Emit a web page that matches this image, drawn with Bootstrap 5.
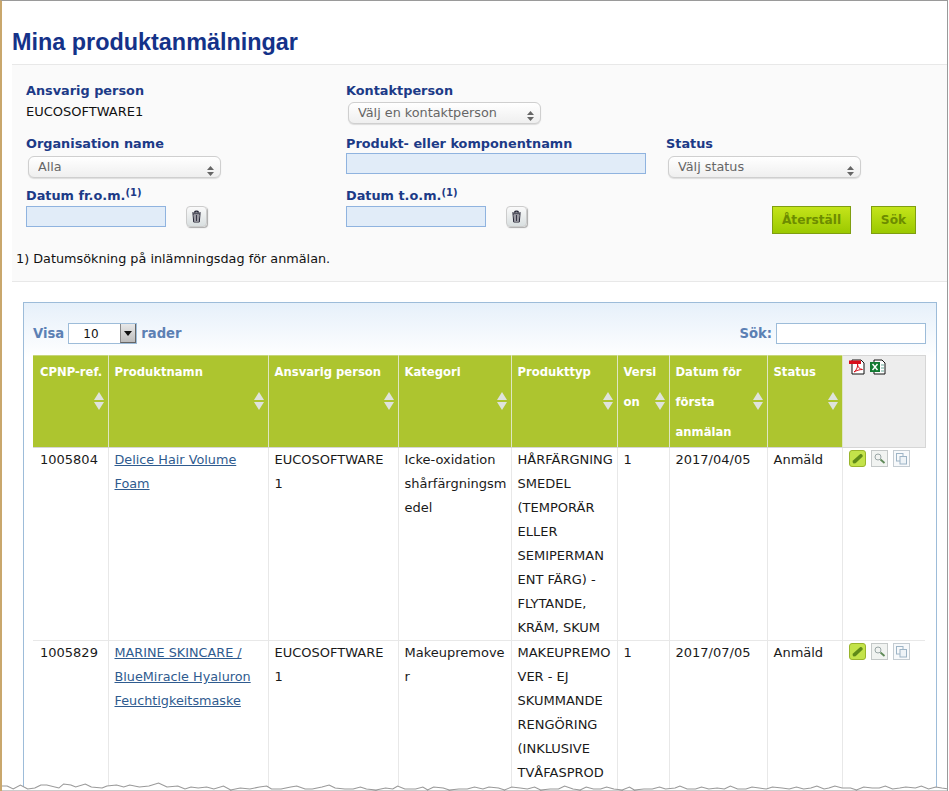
<!DOCTYPE html>
<html lang="sv">
<head>
<meta charset="utf-8">
<title>Mina produktanmälningar</title>
<link rel="stylesheet" href="https://cdn.jsdelivr.net/npm/bootstrap@5.3.0/dist/css/bootstrap.min.css">
<style>
html,body{margin:0;background:#fff;overflow:hidden}
body{font-family:"DejaVu Sans",Verdana,sans-serif;font-size:13px;color:#1a1a1a}
.frame{position:relative;width:948px;height:791px;overflow:hidden;background:#fff;border-top:1px solid #9a9a9a;border-left:2px solid #c9a76c;border-right:1px solid #9a9a9a}
.page-title{font-family:"Liberation Sans",Arial,sans-serif;font-weight:700;font-size:23.4px;line-height:28px;color:#143289;margin:27px 0 8px 10px}
.filter-panel{margin-left:10px;height:218px;background:#fafafa;border-top:1px solid #e8e8e8;border-bottom:1px solid #e8e8e8;padding:18px 0 0 14px}
.filter-grid{display:grid;grid-template-columns:320px 320px 1fr}
.f-label{display:block;font-weight:700;font-size:12.85px;line-height:16px;color:#1c3a87;margin:0}
.f-label sup{font-size:10px;top:-.45em}
.f-value{line-height:16px;margin-top:5px;font-size:13px;color:#111}
.cell-a{height:53px}.cell-b{height:52px}
.pill-select{display:block;width:193px;height:22px;margin:3px 0 0 2px;padding:0 0 0 9px;font-family:inherit;font-size:12.8px;line-height:20px;color:#666;border:1px solid #cfcfcf;border-radius:6px;background-color:#f6f6f6;background-image:linear-gradient(#fff,#efefef);appearance:none;box-shadow:0 1px 1px #ddd}
.cell-b .pill-select{margin-top:4px}
.pill-wrap{position:relative;width:195px}
.pill-wrap svg{position:absolute;right:7px;top:9px}
.cell-b .pill-wrap svg{top:10px}
.blue-input{display:block;height:21px;border:1px solid #8fb3df;background:#e1ecf8;border-radius:0;padding:0 3px}
.w-date{width:140px}.w-prod{width:300px;margin-top:1px}
.date-row{display:flex;align-items:flex-start;gap:20px;margin-top:2px}
.trash-btn{width:21px;height:21px;padding:0;display:flex;align-items:center;justify-content:center;border:1px solid #ccc;border-radius:4px;background:linear-gradient(#fafafa,#d9dfe0);box-shadow:1px 1px 1px #aaa}
.action-col{display:flex;gap:20px;padding:18px 0 0 106px}
.lime-btn{height:28px;padding:0;border:1px solid #7f9e10;border-radius:0;background:linear-gradient(#c4e41a,#9bc900);color:#6d8c00;font-weight:700;font-family:inherit;font-size:12.2px;line-height:26px}
.lime-btn:hover{background:linear-gradient(#c4e41a,#9bc900);color:#6d8c00;border-color:#7f9e10}
.w-reset{width:79px}.w-find{width:45px}
.foot-note{margin:17px 0 0 -10px;line-height:16px;font-size:12.8px;color:#111}
.table-panel{margin:20px 0 0 21px;width:914px;height:600px;border:1px solid #9dbcd9;background:linear-gradient(#e6f0fa 0,#fff 55px);padding:20px 10px 0 9px}
.tools-row{display:flex;justify-content:space-between;align-items:center;height:21px;margin-bottom:11px;font-weight:700;font-size:13.2px;color:#5c80b4}
.len-box{display:inline-flex;align-items:stretch;width:69px;height:21px;margin:0 4px;border:1px solid #9dbcd9;background:#fff;vertical-align:middle}
.len-box select{flex:1;min-width:0;border:0;background:#fff;appearance:none;padding:0 0 0 14px;font-family:inherit;font-size:12px;color:#111;outline:0}
.len-arrow{width:16px;background:linear-gradient(#e8e8e8,#bdbdbd);border-left:1px solid #888;border-right:1px solid #666;border-bottom:1px solid #666;display:flex;align-items:center;justify-content:center}
.search-input{width:150px;height:21px;border:1px solid #9dbcd9;background:#fff;margin-left:4px;padding:0 3px;vertical-align:middle}
.prod-table{table-layout:fixed;width:892px;border-collapse:collapse;margin:0;font-size:13px}
.prod-table th{position:relative;vertical-align:top;background:#adc52f;color:#fff;font-weight:700;font-size:11.6px;line-height:30px;padding:2px 0 0 6px;border-right:1px solid #dfe6c2;white-space:nowrap;border-bottom:1px solid #d6d6d6;box-shadow:inset 0 1px #c6d57a}
.prod-table th.tools-head{background:#ededed;border-right:1px solid #d6d6d6;padding:4px 0 0 6px;box-shadow:inset 0 1px #d6d6d6}
.prod-table td{vertical-align:top;line-height:24px;padding:0 0 0 6px;border-right:1px solid #e8e8e8;border-bottom:1px solid #e8e8e8;white-space:nowrap;color:#1a1a1a;overflow:hidden}
.prod-table th:first-child,.prod-table td:first-child{padding-left:7px}
.prod-table td:last-child{border-right:0;padding:2px 0 0 6px}
.prod-table tr.open-row td{border-bottom:0;height:170px}
.prod-table a{color:#2f5b8f;text-decoration:underline;font-size:12.8px}
.sort-mark{position:absolute;right:4px;top:37px}
.icon-set{display:flex;gap:5px;line-height:0}
.head-icons{display:flex;gap:4px;line-height:0}
.tear{position:absolute;left:-2px;bottom:0;display:block}
</style>
</head>
<body>
<div class="frame">
  <h1 class="page-title">Mina produktanmälningar</h1>

  <form class="filter-panel">
    <div class="filter-grid">
      <div class="cell-a">
        <span class="f-label">Ansvarig person</span>
        <div class="f-value">EUCOSOFTWARE1</div>
      </div>
      <div class="cell-a">
        <label class="f-label">Kontaktperson</label>
        <div class="pill-wrap">
          <select class="pill-select"><option>Välj en kontaktperson</option></select>
          <svg width="7" height="10" viewBox="0 0 7 10"><path d="M3.500 0L7 4H0zM3.500 10L0 6h7z" fill="#666"/></svg>
        </div>
      </div>
      <div></div>

      <div class="cell-b">
        <label class="f-label">Organisation name</label>
        <div class="pill-wrap">
          <select class="pill-select"><option>Alla</option></select>
          <svg width="7" height="10" viewBox="0 0 7 10"><path d="M3.500 0L7 4H0zM3.500 10L0 6h7z" fill="#666"/></svg>
        </div>
      </div>
      <div class="cell-b">
        <label class="f-label">Produkt- eller komponentnamn</label>
        <input class="blue-input w-prod" type="text">
      </div>
      <div class="cell-b">
        <label class="f-label">Status</label>
        <div class="pill-wrap">
          <select class="pill-select"><option>Välj status</option></select>
          <svg width="7" height="10" viewBox="0 0 7 10"><path d="M3.500 0L7 4H0zM3.500 10L0 6h7z" fill="#666"/></svg>
        </div>
      </div>

      <div>
        <label class="f-label">Datum fr.o.m.<sup>(1)</sup></label>
        <div class="date-row">
          <input class="blue-input w-date" type="text">
          <button type="button" class="btn trash-btn" aria-label="Rensa">
            <svg width="11" height="13" viewBox="0 0 11 13"><path d="M1 3h9M3.500 2.200C4 .8 7 .8 7.500 2.200" fill="none" stroke="#223" stroke-width="1.200"/><path d="M2 4h7l-.7 8H2.700z" fill="#fff" stroke="#223"/><path d="M4 5v6M5.500 5v6M7 5v6" stroke="#223" stroke-width=".9"/></svg>
          </button>
        </div>
      </div>
      <div>
        <label class="f-label">Datum t.o.m.<sup>(1)</sup></label>
        <div class="date-row">
          <input class="blue-input w-date" type="text">
          <button type="button" class="btn trash-btn" aria-label="Rensa">
            <svg width="11" height="13" viewBox="0 0 11 13"><path d="M1 3h9M3.500 2.200C4 .8 7 .8 7.500 2.200" fill="none" stroke="#223" stroke-width="1.200"/><path d="M2 4h7l-.7 8H2.700z" fill="#fff" stroke="#223"/><path d="M4 5v6M5.500 5v6M7 5v6" stroke="#223" stroke-width=".9"/></svg>
          </button>
        </div>
      </div>
      <div class="action-col">
        <button type="button" class="btn lime-btn w-reset">Återställ</button>
        <button type="button" class="btn lime-btn w-find">Sök</button>
      </div>
    </div>
    <p class="foot-note">1) Datumsökning på inlämningsdag för anmälan.</p>
  </form>

  <div class="table-panel">
    <div class="tools-row">
      <div>Visa<span class="len-box"><select><option>10</option></select><span class="len-arrow"><svg width="8" height="5" viewBox="0 0 8 5"><path d="M0 0h8L4 5z" fill="#111"/></svg></span></span>rader</div>
      <div>Sök:<input class="search-input" type="text"></div>
    </div>
    <table class="prod-table">
      <colgroup><col style="width:75px"><col style="width:160px"><col style="width:130px"><col style="width:113px"><col style="width:106px"><col style="width:52px"><col style="width:98px"><col style="width:75px"><col style="width:83px"></colgroup>
      <thead>
        <tr>
          <th>CPNP-ref.<svg class="sort-mark" width="10" height="18" viewBox="0 0 10 18"><path d="M5 0l5 8H0z" fill="#dfe3dc"/><path d="M5 18l5-8H0z" fill="#dfe3dc"/></svg></th>
          <th>Produktnamn<svg class="sort-mark" width="10" height="18" viewBox="0 0 10 18"><path d="M5 0l5 8H0z" fill="#dfe3dc"/><path d="M5 18l5-8H0z" fill="#dfe3dc"/></svg></th>
          <th>Ansvarig person<svg class="sort-mark" width="10" height="18" viewBox="0 0 10 18"><path d="M5 0l5 8H0z" fill="#dfe3dc"/><path d="M5 18l5-8H0z" fill="#dfe3dc"/></svg></th>
          <th>Kategori<svg class="sort-mark" width="10" height="18" viewBox="0 0 10 18"><path d="M5 0l5 8H0z" fill="#dfe3dc"/><path d="M5 18l5-8H0z" fill="#dfe3dc"/></svg></th>
          <th>Produkttyp<svg class="sort-mark" width="10" height="18" viewBox="0 0 10 18"><path d="M5 0l5 8H0z" fill="#dfe3dc"/><path d="M5 18l5-8H0z" fill="#dfe3dc"/></svg></th>
          <th>Versi<br>on<svg class="sort-mark" width="10" height="18" viewBox="0 0 10 18"><path d="M5 0l5 8H0z" fill="#dfe3dc"/><path d="M5 18l5-8H0z" fill="#dfe3dc"/></svg></th>
          <th>Datum för<br>första<br>anmälan<svg class="sort-mark" width="10" height="18" viewBox="0 0 10 18"><path d="M5 0l5 8H0z" fill="#dfe3dc"/><path d="M5 18l5-8H0z" fill="#dfe3dc"/></svg></th>
          <th>Status<svg class="sort-mark" width="10" height="18" viewBox="0 0 10 18"><path d="M5 0l5 8H0z" fill="#dfe3dc"/><path d="M5 18l5-8H0z" fill="#dfe3dc"/></svg></th>
          <th class="tools-head"><div class="head-icons">
            <svg width="17" height="16" viewBox="0 0 17 16"><path d="M3 1h9l3 3v11H3z" fill="#fff" stroke="#111"/><path d="M0 1.500h12V5H0z" fill="#d8101c"/><path d="M5 13c3-2 4-6 3.500-8 0 3 2 5 5 5.500-3 0-6 1-8.500 2.500z" fill="none" stroke="#d8101c"/></svg>
            <svg width="16" height="16" viewBox="0 0 16 16"><path d="M4 1h8l3 3v11H4z" fill="#fff" stroke="#111"/><path d="M0 3h10v10H0z" fill="#127a32"/><path d="M2.500 5l5 6M7.500 5l-5 6" stroke="#fff" stroke-width="1.400"/><path d="M11 6h3M11 9h3M11 12h3" stroke="#6a9"/></svg>
          </div></th>
        </tr>
      </thead>
      <tbody>
        <tr>
          <td>1005804</td>
          <td><a href="#">Delice Hair Volume<br>Foam</a></td>
          <td>EUCOSOFTWARE<br>1</td>
          <td>Icke-oxidation<br>shårfärgningsm<br>edel</td>
          <td>HÅRFÄRGNING<br>SMEDEL<br>(TEMPORÄR<br>ELLER<br>SEMIPERMAN<br>ENT FÄRG) -<br>FLYTANDE,<br>KRÄM, SKUM</td>
          <td>1</td>
          <td>2017/04/05</td>
          <td>Anmäld</td>
          <td><div class="icon-set">
            <svg width="17" height="17" viewBox="0 0 17 17"><rect x=".5" y=".5" width="16" height="16" rx="2.500" fill="#c3e34a" stroke="#9ab52c"/><path d="M3.500 12l1 1.500 2-.2 7-6.500c1-1.500-1-3.500-2.500-2.500L4 10.500z" fill="#5f8a18"/></svg>
            <svg width="17" height="17" viewBox="0 0 17 17"><rect x=".5" y=".5" width="16" height="16" fill="#f1f3f1" stroke="#c4c8c8"/><circle cx="7" cy="7" r="3" fill="none" stroke="#9aa6a6"/><path d="M9.500 9.500l4 3.500" stroke="#5f8a58" stroke-width="1.800"/></svg>
            <svg width="17" height="17" viewBox="0 0 17 17"><rect x=".5" y=".5" width="16" height="16" fill="#f7f9fb" stroke="#c4ccd2"/><rect x="3.500" y="3.500" width="6.500" height="7.500" fill="none" stroke="#9db4c6"/><rect x="7" y="6.500" width="6.500" height="7.500" fill="#eef3f7" stroke="#9db4c6"/></svg>
          </div></td>
        </tr>
        <tr class="open-row">
          <td>1005829</td>
          <td><a href="#">MARINE SKINCARE /<br>BlueMiracle Hyaluron<br>Feuchtigkeitsmaske</a></td>
          <td>EUCOSOFTWARE<br>1</td>
          <td>Makeupremove<br>r</td>
          <td>MAKEUPREMO<br>VER - EJ<br>SKUMMANDE<br>RENGÖRING<br>(INKLUSIVE<br>TVÅFASPROD</td>
          <td>1</td>
          <td>2017/07/05</td>
          <td>Anmäld</td>
          <td><div class="icon-set">
            <svg width="17" height="17" viewBox="0 0 17 17"><rect x=".5" y=".5" width="16" height="16" rx="2.500" fill="#c3e34a" stroke="#9ab52c"/><path d="M3.500 12l1 1.500 2-.2 7-6.500c1-1.500-1-3.500-2.500-2.500L4 10.500z" fill="#5f8a18"/></svg>
            <svg width="17" height="17" viewBox="0 0 17 17"><rect x=".5" y=".5" width="16" height="16" fill="#f1f3f1" stroke="#c4c8c8"/><circle cx="7" cy="7" r="3" fill="none" stroke="#9aa6a6"/><path d="M9.500 9.500l4 3.500" stroke="#5f8a58" stroke-width="1.800"/></svg>
            <svg width="17" height="17" viewBox="0 0 17 17"><rect x=".5" y=".5" width="16" height="16" fill="#f7f9fb" stroke="#c4ccd2"/><rect x="3.500" y="3.500" width="6.500" height="7.500" fill="none" stroke="#9db4c6"/><rect x="7" y="6.500" width="6.500" height="7.500" fill="#eef3f7" stroke="#9db4c6"/></svg>
          </div></td>
        </tr>
      </tbody>
    </table>
  </div>

  <svg class="tear" width="949" height="10" viewBox="0 0 790 10" preserveAspectRatio="none"><path d="M0 5l6 0 5 3 6-4 6 4 6-1 5-3 5 0 10 3 4-4 6 1 4 2 8-3 5 3 9 1 4-2 8-1 6 2 5-2 8 2 8-1 8-3 7 4 9-1 6 3 5-2 6 1 7-1 6 2 8-3 6 4 8-2 8 1 8-2 6-1 4 3 8 0 8-2 5-1 7 3 6 0 8-2 6-2 5 3 8 1 7 0 6-2 5 2 8 1 8-2 6 1 4-3 6 3 9 0 6-2 4 3 5-3 8 1 5 2 8-1 7 0 6-2 7 2 5-2 8 1 5 2 6-3 7 1 6 1 6-2 5 3 8-1 7 0 5-3 7 3 6 1 5-3 6 2 6 0 5-2 6 2 7 1 6-3 4 3 8-1 7 0 6-2 5 2 8-1 4-2 6 3 7 0 5-2 6 2 7-1 6 1 5-3 6 3 7 0 5-2 6 1 6 1 5-2 8 1 6 1 6-2 6 2 6-1 5-2 6 3 4-1 5-2 6 2 7 0 5 2 6-3 7 1 6 0 5-2 6 3 6-1 5-1 8 1 5-2 6 3 6-2 5 1 6 1V10H0z" fill="#fff" stroke="#9a9a9a" stroke-width="1"/></svg>
</div>
<script src="https://cdn.jsdelivr.net/npm/bootstrap@5.3.0/dist/js/bootstrap.bundle.min.js"></script>
</body>
</html>
